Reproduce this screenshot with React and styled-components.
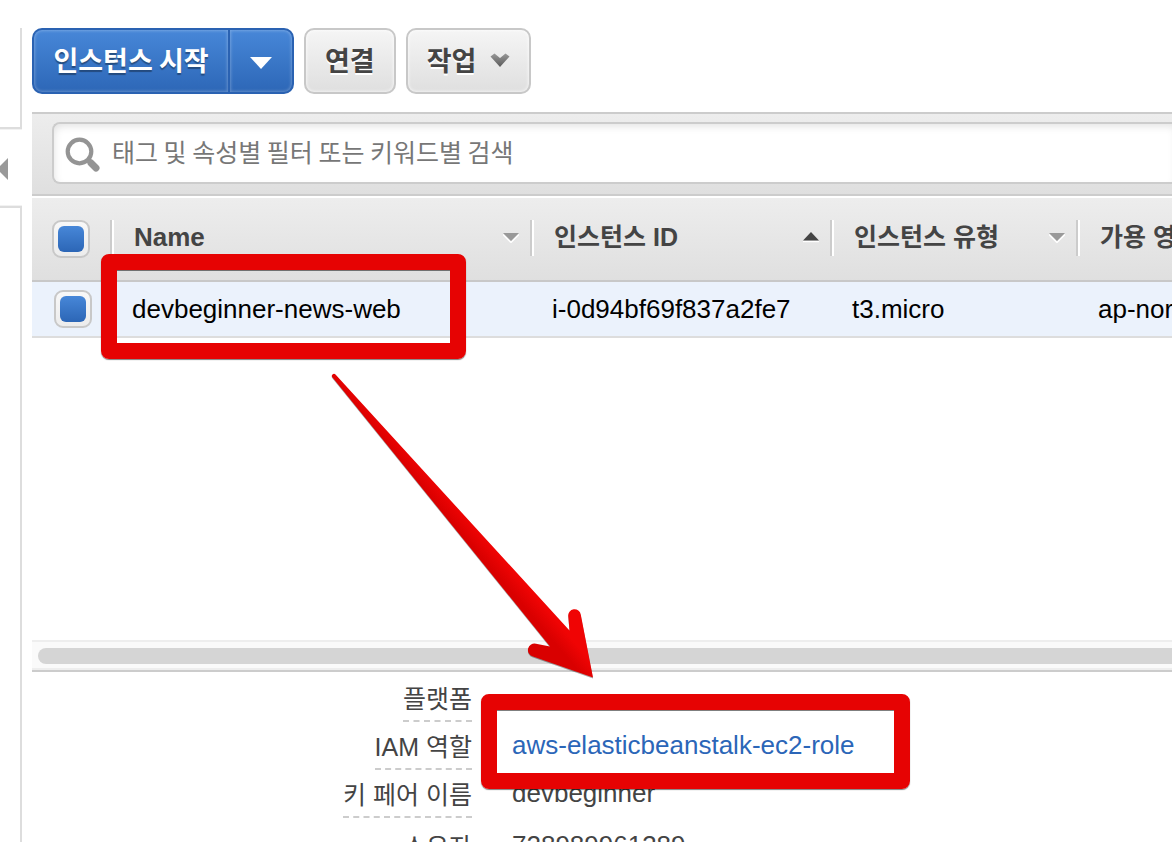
import React from "react";
import styled, { createGlobalStyle, css } from "styled-components";

const latin = `"Liberation Sans", "Noto Sans CJK KR", sans-serif`;
const korean = `"Noto Sans CJK KR", "Liberation Sans", sans-serif`;

const GlobalStyle = createGlobalStyle`
  * { box-sizing: border-box; }
  html, body, #root { height: 100%; }
  body {
    margin: 0;
    overflow: hidden;
    background: #fff;
    color: #444;
    font-family: ${latin};
    font-size: 26px;
  }
`;

const Page = styled.div`
  position: relative;
  display: flex;
  gap: 10px;
  height: 100%;
  overflow: hidden;
`;

const Sidebar = styled.aside`
  flex: 0 0 22px;
  display: flex;
  flex-direction: column;
  padding-top: 28px;
`;

const SidePanel = styled.div`
  border-right: 2px solid #ddd;
  ${(p) =>
    p.$grow
      ? css`flex: 1; border-top: 2px solid #ddd; box-shadow: 0 -1px 0 #f2f2f2;`
      : css`flex: 0 0 101px; border-bottom: 2px solid #ddd; box-shadow: 0 1px 0 #f2f2f2;`}
`;

const CollapseButton = styled.button`
  flex: 0 0 77px;
  display: flex;
  align-items: center;
  padding: 2px 0 0;
  border: 0;
  background: none;
`;

const Main = styled.main`
  flex: 1;
  min-width: 0;
  display: flex;
  flex-direction: column;
  padding-top: 28px;
`;

const Toolbar = styled.div`
  display: flex;
  gap: 10px;
  margin-bottom: 18px;
`;

const ButtonGroup = styled.div`
  display: flex;
`;

const buttonBase = css`
  display: flex;
  align-items: center;
  justify-content: center;
  height: 66px;
  font-family: ${korean};
  font-size: 27px;
  font-weight: 700;
  line-height: 36px;
  white-space: nowrap;
`;

const PrimaryButton = styled.button`
  ${buttonBase}
  padding: 0 18px 2px;
  border: 2px solid #2a62b2;
  border-radius: 10px 0 0 10px;
  border-right-width: 0;
  width: 196px;
  background: linear-gradient(#4787d8, #2d67b7);
  box-shadow: inset 0 0 3px 1px rgba(255, 255, 255, 0.25);
  color: #fff;
  text-shadow: 0 2px 1px rgba(0, 0, 0, 0.35);
`;

const SplitButton = styled(PrimaryButton)`
  width: 66px;
  padding: 4px 0 0;
  border-right-width: 2px;
  border-radius: 0 10px 10px 0;
`;

const GrayButton = styled.button`
  ${buttonBase}
  gap: 14px;
  padding: 0 19px 2px;
  border: 2px solid #c8c8c8;
  border-radius: 10px;
  background: linear-gradient(#f5f5f5, #dfdfdf);
  box-shadow: inset 0 0 3px 1px rgba(255, 255, 255, 0.6);
  color: #444;
  text-shadow: 0 2px 0 #fff;
`;

const FilterBar = styled.div`
  height: 84px;
  padding: 8px 0 0 20px;
  border-top: 2px solid #ccc;
  border-bottom: 2px solid #ccc;
  background: linear-gradient(#ededed, #dfdfdf);
`;

const SearchBox = styled.label`
  display: flex;
  align-items: center;
  gap: 10px;
  height: 62px;
  padding-left: 10px;
  border: 2px solid #ccc;
  border-right: 0;
  border-radius: 8px 0 0 8px;
  background: #fff;
  box-shadow: inset 2px 4px 8px -2px rgba(0, 0, 0, 0.12);
`;

const SearchInput = styled.input`
  flex: 1;
  min-width: 0;
  height: 44px;
  padding: 0 0 4px;
  border: 0;
  outline: 0;
  background: none;
  font-family: ${korean};
  font-size: 25px;
  &::placeholder { color: #777; opacity: 1; }
`;

const TableScroll = styled.div`
  min-height: 444px;
  padding-top: 2px;
  overflow: hidden;
`;

const Table = styled.table`
  width: 100%;
  min-width: 1340px;
  table-layout: fixed;
  border-collapse: separate;
  border-spacing: 0;
`;

const Col = styled.col`
  width: ${(p) => p.$width};
`;

const HeadRow = styled.tr`
  background: linear-gradient(#ededed, #dfdfdf);
`;

const HeadCell = styled.th`
  height: 84px;
  padding: 22px 0 0 ${(p) => (p.$check ? "20px" : "0")};
  border-bottom: 2px solid #c8c8c8;
  vertical-align: top;
  text-align: left;
`;

const HeadContent = styled.div`
  display: flex;
  align-items: center;
  justify-content: space-between;
  height: 36px;
  padding: 0 11px 2px 22px;
  border-left: 2px solid #ccc;
  box-shadow: inset 2px 0 0 #fff;
  font-size: ${(p) => (p.$latin ? "26px" : "25px")};
  font-weight: 700;
  line-height: 34px;
  white-space: nowrap;
`;

const BodyCell = styled.td`
  height: 56px;
  padding: 0 0 0 22px;
  border-bottom: 2px solid #ddd;
  background: #ebf2fc;
  color: #000;
  line-height: 30px;
  white-space: nowrap;
`;

const Checkbox = styled.input`
  appearance: none;
  display: block;
  width: 38px;
  height: 38px;
  margin: 0;
  padding: 4px;
  border: 2px solid #c8c8c8;
  border-radius: 9px;
  background: linear-gradient(#f8f8f8, #ececec);
  &:checked::before {
    content: "";
    display: block;
    height: 26px;
    border-radius: 6px;
    background: linear-gradient(#4787d8, #2c66b6);
  }
`;

const ScrollTrack = styled.div`
  flex: 0 0 32px;
  padding: 6px 0 4px 6px;
  border-top: 2px solid #eee;
  border-bottom: 2px solid #ccc;
  background: #fafafa;
  box-shadow: inset 0 -2px 0 #eee;
`;

const ScrollThumb = styled.div`
  height: 16px;
  border-radius: 8px 0 0 8px;
  background: #d5d5d5;
`;

const Details = styled.dl`
  flex: 1;
  min-height: 0;
  margin: 0;
  padding-top: 2px;
  overflow: hidden;
`;

const DetailRow = styled.div`
  display: grid;
  grid-template-columns: 440px 1fr;
  column-gap: 40px;
  height: 48px;
  margin-top: ${(p) => (p.$newGroup ? "4px" : "0")};
`;

const DetailLabel = styled.dt`
  justify-self: end;
  padding-top: 4px;
  border-bottom: 2px dashed #ccc;
  font-size: 25px;
  line-height: 42px;
  white-space: nowrap;
`;

const DetailValue = styled.dd`
  margin: 0;
  line-height: 46px;
  white-space: nowrap;
`;

const Link = styled.a`
  color: #2b66b8;
  text-decoration: none;
`;

const Highlight = styled.div`
  position: absolute;
  left: ${(p) => p.$x}px;
  top: ${(p) => p.$y}px;
  width: ${(p) => p.$w}px;
  height: ${(p) => p.$h}px;
  border: 16px solid #e60303;
  border-radius: 8px;
  box-shadow: 0 1px 1px rgba(0, 0, 0, 0.5), inset 0 1px 0 rgba(0, 0, 0, 0.5);
  pointer-events: none;
`;

const Arrow = styled.svg`
  position: absolute;
  left: 320px;
  top: 364px;
  filter: drop-shadow(0 1px 0 rgba(0, 0, 0, 0.35));
  pointer-events: none;
`;

const SortIcon = ({ up }) => (
  <svg width="16" height="12" viewBox="0 0 16 12" aria-hidden="true">
    <path d={up ? "M0 10.500h16" : "M0 3.500 8 11.500 16 3.500"} fill="none" stroke="#fff" strokeWidth="1.4" />
    <path d={up ? "M0 9.500 8 1l8 8.500z" : "M0 2h16L8 10z"} fill={up ? "#444" : "#999"} />
  </svg>
);

const columns = [
  { title: "Name", latin: true },
  { title: "인스턴스 ID", up: true },
  { title: "인스턴스 유형" },
  { title: "가용 영역" },
];

const instance = ["devbeginner-news-web", "i-0d94bf69f837a2fe7", "t3.micro", "ap-northeast-2a"];

const details = [
  { label: "플랫폼", value: "" },
  { label: "IAM 역할", value: "aws-elasticbeanstalk-ec2-role", link: true },
  { label: "키 페어 이름", value: "devbeginner" },
  { label: "소유자", value: "728989961389", newGroup: true },
];

export default function App() {
  return (
    <>
      <GlobalStyle />
      <Page>
        <Sidebar>
          <SidePanel />
          <CollapseButton aria-label="사이드바 접기">
            <svg width="8" height="24" viewBox="0 0 8 24" aria-hidden="true">
              <path d="M8 1v22L-3 12z" fill="#999" />
            </svg>
          </CollapseButton>
          <SidePanel $grow />
        </Sidebar>
        <Main>
          <Toolbar>
            <ButtonGroup>
              <PrimaryButton>인스턴스 시작</PrimaryButton>
              <SplitButton aria-label="시작 옵션">
                <svg width="22" height="12" viewBox="0 0 22 12" aria-hidden="true">
                  <path d="M0 0h22L11 12z" fill="#fff" />
                </svg>
              </SplitButton>
            </ButtonGroup>
            <GrayButton>연결</GrayButton>
            <GrayButton>
              작업
              <svg width="20" height="14" viewBox="0 0 20 14" aria-hidden="true">
                <defs>
                  <linearGradient id="chevron" x1="0" y1="0" x2="0" y2="1">
                    <stop offset="0" stopColor="#999" />
                    <stop offset="1" stopColor="#5a5a5a" />
                  </linearGradient>
                </defs>
                <path d="M0.500 3.500 4.500 0.500 10 5l5.500-4.500 4 3L10 14z" fill="url(#chevron)" />
              </svg>
            </GrayButton>
          </Toolbar>
          <FilterBar>
            <SearchBox>
              <svg width="38" height="38" viewBox="0 0 38 38" fill="none" stroke="#949494" aria-hidden="true">
                <circle cx="15.500" cy="17.500" r="11.800" strokeWidth="4.200" />
                <path d="m24 26 3 2.500" strokeWidth="5" />
                <path d="m27 29 5 5" strokeWidth="7" strokeLinecap="round" />
              </svg>
              <SearchInput aria-label="검색" placeholder="태그 및 속성별 필터 또는 키워드별 검색" />
            </SearchBox>
          </FilterBar>
          <TableScroll>
            <Table>
              <colgroup>
                <Col $width="78px" />
                <Col $width="420px" />
                <Col $width="300px" />
                <Col $width="246px" />
                <Col $width="auto" />
              </colgroup>
              <thead>
                <HeadRow>
                  <HeadCell $check>
                    <Checkbox type="checkbox" defaultChecked aria-label="모두 선택" />
                  </HeadCell>
                  {columns.map((c) => (
                    <HeadCell key={c.title}>
                      <HeadContent $latin={c.latin}>
                        {c.title}
                        <SortIcon up={c.up} />
                      </HeadContent>
                    </HeadCell>
                  ))}
                </HeadRow>
              </thead>
              <tbody>
                <tr>
                  <BodyCell>
                    <Checkbox type="checkbox" defaultChecked aria-label={instance[0]} />
                  </BodyCell>
                  {instance.map((v) => (
                    <BodyCell key={v}>{v}</BodyCell>
                  ))}
                </tr>
              </tbody>
            </Table>
          </TableScroll>
          <ScrollTrack>
            <ScrollThumb />
          </ScrollTrack>
          <Details>
            {details.map((d) => (
              <DetailRow key={d.label} $newGroup={d.newGroup}>
                <DetailLabel>{d.label}</DetailLabel>
                <DetailValue>{d.link ? <Link href="#role">{d.value}</Link> : d.value}</DetailValue>
              </DetailRow>
            ))}
          </Details>
        </Main>
        <Highlight $x={101} $y={254} $w={365} $h={105} />
        <Highlight $x={481} $y={694} $w={429} $h={95} />
        <Arrow width="290" height="324" viewBox="320 364 290 324" aria-hidden="true">
          <defs>
            <linearGradient id="shaft" gradientUnits="userSpaceOnUse" x1="543" y1="650" x2="577" y2="621">
              <stop offset="0.3" stopColor="#d90000" />
              <stop offset="0.65" stopColor="#f00404" />
            </linearGradient>
          </defs>
          <path
            d="M332.500 377.500a2 2 0 0 1 3-3L569.500 630.500 568.300 616.500a6.300 6.300 0 0 1 12.500-1.800L593 677.500 533 656.500a6.500 6.500 0 0 1 3-12.800L550 646.500z"
            fill="url(#shaft)"
          />
        </Arrow>
      </Page>
    </>
  );
}
